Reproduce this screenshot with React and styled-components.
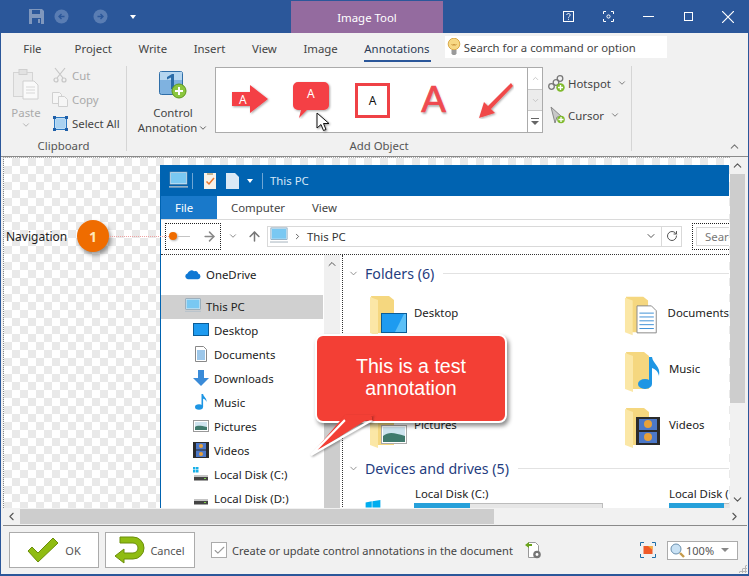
import React from 'react';
import styled, { createGlobalStyle } from 'styled-components';
import {
  ChevronDown, ChevronUp, ChevronLeft, ChevronRight, ArrowRight, ArrowUp, RotateCw, Check,
} from 'lucide-react';

const GlobalStyle = createGlobalStyle`
  html, body { margin: 0; padding: 0; background: #2b579a; }
  body { font-family: "Noto Sans", "Open Sans", Arial, sans-serif; font-size: 11.4px; color: #444; }
  * { box-sizing: border-box; }
`;

const Win = styled.div`
  width: 749px;
  height: 576px;
  background: #2b579a;
  display: flex;
  flex-direction: column;
  overflow: hidden;
`;

const TitleBar = styled.div`
  height: 33px;
  display: flex;
  align-items: center;
  padding-left: 29px;
  flex: none;
`;

const Qat = styled.div`
  width: 262px;
  display: flex;
  align-items: center;
`;

const QatItem = styled.div`
  display: flex;
  margin-left: ${p => p.$ml}px;
`;

const ContextTab = styled.div`
  width: 152px;
  height: 32px;
  margin-top: 1px;
  background: #946b9f;
  color: #fff;
  display: flex;
  align-items: center;
  justify-content: center;
`;

const WinButtons = styled.div`
  margin-left: 105px;
  display: flex;
  align-items: center;
  color: #fff;
`;

const WinBtn = styled.div`
  width: 40px;
  display: flex;
  justify-content: center;
`;

const Body = styled.div`
  flex: 1;
  margin: 0 1px 2px 1px;
  background: #f1f1f1;
  display: flex;
  flex-direction: column;
  min-height: 0;
`;

const TabRow = styled.div`
  height: 33px;
  display: flex;
  align-items: flex-start;
  padding-left: 22px;
  flex: none;
`;

const RibbonTab = styled.div`
  padding: 8px 13.3px 0;
  height: 29px;
  color: #444;
  position: relative;
  margin-left: ${p => p.$first ? '-13px' : '0'};
  margin-right: ${p => p.$first ? '6.5px' : '0'};
  ${p => p.$active && `
    color: #2b3a55;
    &::after {
      content: '';
      position: absolute;
      left: 13px; right: 12px; bottom: 0;
      height: 2px;
      background: #2b579a;
    }
  `}
`;

const SearchBox = styled.div`
  width: 222px;
  height: 22px;
  margin: 3px 0 0 2px;
  background: #fff;
  display: flex;
  align-items: center;
  gap: 3px;
  padding-left: 2px;
  font-size: 11.3px;
`;

const Ribbon = styled.div`
  height: 91px;
  flex: none;
  display: flex;
  border-bottom: 1px solid #8a8a8a;
  position: relative;
`;

const Group = styled.div`
  width: ${p => p.$w}px;
  border-right: 1px solid #d5d5d5;
  margin-bottom: 5px;
  display: flex;
  flex-direction: column;
  flex: none;
`;

const GroupBody = styled.div`
  flex: 1;
  display: flex;
  min-height: 0;
`;

const GroupLabel = styled.div`
  width: ${p => p.$w ? p.$w + 'px' : 'auto'};
  height: 15px;
  text-align: center;
  color: #555;
  line-height: 20px;
`;

const PasteBtn = styled.div`
  width: 50px;
  padding-top: 3px;
  display: flex;
  flex-direction: column;
  align-items: center;
  color: #aaa;
  line-height: 15px;
  flex: none;
`;

const PasteLabel = styled.span`
  margin-top: 5px;
`;

const SmallCol = styled.div`
  display: flex;
  flex-direction: column;
  gap: 8px;
  padding: 1px 0 0 1px;
`;

const SmallBtn = styled.div`
  display: flex;
  align-items: center;
  gap: 4px;
  height: 16px;
  color: ${p => p.$off ? '#aaa' : '#444'};
`;

const SmallIconBox = styled.div`
  width: 16px;
  display: flex;
  justify-content: center;
`;

const ControlBtn = styled.div`
  width: 88px;
  display: flex;
  flex-direction: column;
  align-items: center;
  padding: 5px 0 0 4px;
  line-height: 15px;
  text-align: center;
  color: #444;
  flex: none;
`;

const ControlLabel = styled.span`
  margin-top: 6px;
`;

const ControlLabel2 = styled.span`
  display: flex;
  align-items: center;
  gap: 1px;
`;

const Gallery = styled.div`
  width: 328px;
  height: 66px;
  margin: 1px 0 0 0;
  background: #fff;
  border: 1px solid #ababab;
  display: flex;
  flex: none;
`;

const GalleryItems = styled.div`
  flex: 1;
  display: flex;
  align-items: center;
  padding-left: 4px;
`;

const GalleryItem = styled.div`
  width: 61px;
  display: flex;
  justify-content: center;
`;

const BoxA = styled.div`
  width: 35px;
  height: 35px;
  border: 3px solid #ef4146;
  color: #111;
  display: flex;
  align-items: center;
  justify-content: center;
  font-size: 12px;
`;

const BigA = styled.div`
  font-family: "Liberation Sans", Arial, sans-serif;
  font-size: 37px;
  line-height: 36px;
  color: #ef4a50;
  -webkit-text-stroke: .7px #ef4a50;
  text-shadow: 1px 2px 2px rgba(0,0,0,.3);
  font-weight: 400;
`;

const GalleryScroll = styled.div`
  width: 15px;
  border-left: 1px solid #ababab;
  display: flex;
  flex-direction: column;
  color: #aaa;
`;

const ScrollCell = styled.div`
  flex: 1;
  display: flex;
  flex-direction: column;
  align-items: center;
  justify-content: center;
  border-bottom: ${p => p.$last ? 'none' : '1px solid #c8c8c8'};
  background: ${p => p.$shade ? '#ececec' : '#fff'};
  color: #bbb;
`;

const MoreLine = styled.div`
  width: 8px;
  height: 1px;
  background: #666;
  margin-bottom: 2px;
`;

const MoreCaret = styled.div`
  width: 0;
  height: 0;
  border: 4px solid transparent;
  border-top: 4px solid #666;
  border-bottom: none;
`;

const SideCol = styled.div`
  display: flex;
  flex-direction: column;
  gap: 14px;
  padding: 8px 0 0 5px;
`;

const SideBtn = styled.div`
  display: flex;
  align-items: center;
  gap: 3px;
  height: 18px;
  color: #444;
`;

const SideChevron = styled.div`
  display: flex;
  margin-left: ${p => p.$ml}px;
  color: #666;
`;

const Collapse = styled.div`
  position: absolute;
  right: 7px;
  bottom: 3px;
  color: #777;
  display: flex;
`;

const MouseCursor = styled.svg`
  position: absolute;
  left: 315px;
  top: 46px;
  filter: drop-shadow(1px 1px 1px rgba(0,0,0,.4));
`;

const WorkArea = styled.div`
  flex: 1;
  margin: 0 1px 0 2px;
  display: grid;
  grid-template-columns: 1fr 17px;
  grid-template-rows: 1fr 17px;
  min-height: 0;
  border-bottom: 1px solid #8a8a8a;
  background: #fff;
`;

const Canvas = styled.div`
  position: relative;
  overflow: hidden;
  min-width: 0;
  border-left: 1px dotted #888;
  border-top: 1px dotted #aaa;
  background: repeating-conic-gradient(#e9e9e9 0 25%, #fff 0 50%) 0 0 / 16px 16px;
`;

const VScroll = styled.div`
  background: #f1f1f1;
  display: flex;
  flex-direction: column;
  color: #555;
  padding-right: 2px;
`;

const VThumb = styled.div`
  height: 229px;
  background: #cdcdcd;
`;

const ArrowCell = styled.div`
  height: ${p => p.$h || 17}px;
  display: flex;
  align-items: center;
  justify-content: center;
  flex: none;
  margin-top: ${p => p.$auto ? 'auto' : '0'};
  margin-left: ${p => p.$autoL ? 'auto' : '0'};
  width: ${p => p.$w ? p.$w + 'px' : 'auto'};
`;

const HScroll = styled.div`
  grid-column: 1 / 3;
  background: #f1f1f1;
  display: flex;
  align-items: center;
  color: #555;
`;

const HThumb = styled.div`
  width: 474px;
  height: 15px;
  background: #cdcdcd;
`;

const Explorer = styled.div`
  position: absolute;
  left: 156px;
  top: 7px;
  width: 569px;
  height: 344px;
  background: #fff;
  border-left: 1px solid #0063b1;
  display: flex;
  flex-direction: column;
  overflow: hidden;
`;

const ExTitle = styled.div`
  height: 31px;
  background: #0063b1;
  color: #d5e8f7;
  display: flex;
  align-items: center;
  padding-left: 8px;
  flex: none;
`;

const ExTitleItem = styled.div`
  display: flex;
  margin-left: ${p => p.$ml}px;
`;

const ExDivider = styled.div`
  width: 1px;
  height: 16px;
  background: #6fa6d4;
  margin-left: ${p => p.$ml}px;
`;

const ExTabs = styled.div`
  height: 24px;
  display: flex;
  align-items: stretch;
  border-bottom: 1px solid #dadada;
  flex: none;
  color: #444;
`;

const ExTab = styled.div`
  padding: 0 ${p => p.$file ? 14 : 13.5}px;
  margin-left: ${p => p.$first ? '0.5px' : '0'};
  min-width: ${p => p.$file ? '56px' : 'auto'};
  display: flex;
  align-items: center;
  background: ${p => p.$file ? '#1979ca' : 'transparent'};
  color: ${p => p.$file ? '#fff' : '#444'};
`;

const ExAddress = styled.div`
  height: 35px;
  display: flex;
  align-items: center;
  border-bottom: 1px dotted #333;
  flex: none;
  padding: 0 0 2px 4px;
  color: #777;
`;

const NavButtons = styled.div`
  width: 56px;
  height: 27px;
  border: 1px dotted #222;
  display: flex;
  align-items: center;
  justify-content: flex-end;
  padding-right: 3px;
  margin-right: 7px;
  flex: none;
`;

const UpCell = styled.div`
  display: flex;
  margin-left: 9px;
`;

const AddressBox = styled.div`
  width: 415px;
  height: 21px;
  border: 1px solid #d9d9d9;
  margin-left: 5px;
  display: flex;
  align-items: center;
  gap: 5px;
  padding-left: 2px;
  color: #333;
  flex: none;
`;

const AddressEnd = styled.div`
  margin-left: auto;
  display: flex;
  align-items: center;
  height: 100%;
  color: #555;
`;

const RefreshCell = styled.div`
  width: 20px;
  height: 100%;
  border-left: 1px solid #d9d9d9;
  margin-left: 4px;
  display: flex;
  align-items: center;
  justify-content: center;
`;

const SearchField = styled.div`
  margin-left: 10px;
  width: 37px;
  height: 27px;
  border: 1px dotted #222;
  border-right: none;
  padding: 3px 0 3px 3px;
  overflow: hidden;
  flex: none;
`;

const SearchInner = styled.div`
  height: 19px;
  border: 1px solid #d9d9d9;
  border-right: none;
  padding-left: 8px;
  color: #777;
  line-height: 17px;
  white-space: nowrap;
  overflow: hidden;
`;

const ExMain = styled.div`
  flex: 1;
  display: flex;
  min-height: 0;
`;

const NavPane = styled.div`
  width: 162px;
  padding-top: 8px;
  display: flex;
  flex-direction: column;
  flex: none;
  color: #222;
`;

const NavRow = styled.div`
  height: 24px;
  display: flex;
  align-items: center;
  gap: 5px;
  flex: none;
  padding: 0 0 2px ${p => p.$indent ? 32 : 24}px;
  margin-bottom: ${p => p.$gap ? 8 : 0}px;
  background: ${p => p.$sel ? '#d0d0d0' : 'transparent'};
  white-space: nowrap;
`;

const NavScroll = styled.div`
  width: 16px;
  margin-left: 1px;
  padding-top: 3px;
  background: #f0f0f0;
  display: flex;
  flex-direction: column;
  align-items: center;
  color: #555;
  flex: none;
`;

const NavThumb = styled.div`
  width: 100%;
  flex: 1;
  margin-top: 100px;
  background: #cdcdcd;
`;

const Content = styled.div`
  flex: 1;
  margin-left: 2px;
  border-left: 1px dotted #333;
  padding: 6px 0 0 5px;
  min-width: 0;
`;

const SectionHead = styled.div`
  display: flex;
  align-items: center;
  gap: 6px;
  height: 24px;
  color: #1f3d80;
  font-size: 14.2px;
  white-space: nowrap;
  &::after {
    content: '';
    flex: 1;
    height: 1px;
    background: #e2e2e2;
    margin-left: 3px;
  }
`;

const FolderGrid = styled.div`
  display: grid;
  grid-template-columns: 255px 1fr;
  grid-auto-rows: 56px;
  padding: 11px 0 0 21px;
  height: 171px;
  color: #222;
`;

const FolderItem = styled.div`
  display: flex;
  align-items: flex-start;
  gap: 7px;
  white-space: nowrap;
  overflow: hidden;
`;

const FolderName = styled.div`
  padding-top: 9px;
`;

const DriveRow = styled.div`
  display: grid;
  grid-template-columns: 304px 1fr;
  padding: 6px 0 0 17px;
  color: #222;
`;

const Drive = styled.div`
  display: flex;
  gap: 34px;
  white-space: nowrap;
  overflow: hidden;
`;

const DriveBar = styled.div`
  width: 189px;
  height: 6px;
  margin: 2px 0 0 -1px;
  background: #e6e6e6;
  border: 1px solid #bcbcbc;
  border-bottom: none;
  position: relative;
  &::before {
    content: '';
    position: absolute;
    left: -1px; top: -1px; bottom: 0;
    width: ${p => p.$pct}%;
    background: #26a0da;
  }
`;

const WinLogo = styled.svg`
  margin-top: 14px;
`;

const MarkerLabel = styled.div`
  position: absolute;
  left: 2px;
  top: 70px;
  color: #222;
  font-size: 12px;
`;

const Marker = styled.div`
  position: absolute;
  left: 73px;
  top: 62px;
  width: 32px;
  height: 32px;
  border-radius: 50%;
  background: #ef6c00;
  color: #ffe9b8;
  font-size: 14px;
  font-weight: 700;
  display: flex;
  align-items: center;
  justify-content: center;
  box-shadow: 2px 3px 4px rgba(0,0,0,.4);
`;

const Leader = styled.div`
  position: absolute;
  left: 105px;
  top: 78px;
  width: 64px;
  border-top: 1px dotted #eda3a3;
`;

const Dot = styled.div`
  position: absolute;
  left: 165px;
  top: 74px;
  width: 8px;
  height: 8px;
  border-radius: 50%;
  background: #ef6c00;
  box-shadow: 1px 1px 2px rgba(0,0,0,.3);
`;

const DotTail = styled.div`
  position: absolute;
  left: 173px;
  top: 78px;
  width: 13px;
  height: 1px;
  background: #c4c4c4;
`;

const Callout = styled.div`
  position: absolute;
  left: 311px;
  top: 176px;
  width: 192px;
  height: 89px;
  background: #f33f35;
  border: 2px solid #fff;
  border-radius: 8px;
  box-shadow: 2px 3px 4px rgba(0,0,0,.45);
  color: #fff;
  font-family: "Liberation Sans", Arial, sans-serif;
  font-size: 19.6px;
  line-height: 22px;
  text-align: center;
  padding-top: 19px;
`;

const CalloutTail = styled.svg`
  position: absolute;
  left: 304px;
  top: 257px;
  filter: drop-shadow(1px 1px 1px rgba(0,0,0,.35));
`;

const Footer = styled.div`
  height: 48px;
  flex: none;
  display: flex;
  align-items: center;
  padding: 0 9px 0 8px;
  position: relative;
  color: #444;
`;

const FootBtn = styled.div`
  width: 90px;
  height: 36px;
  border: 1px solid #ababab;
  background: #fff;
  margin-right: 6px;
  display: flex;
  align-items: center;
  justify-content: center;
  gap: ${p => p.$gap}px;
  font-size: 11px;
  color: #555;
`;

const CheckBox = styled.div`
  width: 16px;
  height: 16px;
  margin-left: 10px;
  background: #fff;
  border: 1px solid #ababab;
  display: flex;
  align-items: center;
  justify-content: center;
  color: #999;
`;

const CheckLabel = styled.div`
  margin-left: 5px;
  width: 293px;
  font-size: 11.05px;
  white-space: nowrap;
`;

const FootSpacer = styled.div`
  width: 98px;
`;

const ZoomCombo = styled.div`
  width: 71px;
  height: 19px;
  margin-left: 11px;
  background: #fff;
  border: 1px solid #ababab;
  display: flex;
  align-items: center;
  gap: 1px;
  padding-left: 2px;
  font-size: 11px;
  color: #555;
`;

const ComboCaret = styled.span`
  width: 0;
  height: 0;
  margin-left: auto;
  margin-right: 8px;
  border: 4px solid transparent;
  border-top-color: #888;
  border-bottom: none;
`;

const Grip = styled.div`
  position: absolute;
  right: 1px;
  bottom: 1px;
  width: 9px;
  height: 9px;
  background: radial-gradient(#b5b5b5 1px, transparent 1.2px) 0 0 / 3px 3px;
  clip-path: polygon(100% 0, 100% 100%, 0 100%);
`;

const Caret = styled.span`
  width: 0;
  height: 0;
  border: 3px solid transparent;
  border-top: 4px solid #fff;
  border-bottom: none;
`;

const SaveIcon = () => (
  <svg width="15" height="15" viewBox="0 0 15 15">
    <path d="M0 0h13l2 2v13H0z" fill="#7f97bd" />
    <path d="M3 1h8v4H3zM3 9h9v6H3z" fill="#2b579a" />
    <path d="M9 10h2v4H9z" fill="#7f97bd" />
  </svg>
);

const DimCircle = ({ dir }) => (
  <svg width="15" height="15" viewBox="0 0 15 15">
    <circle cx="7.5" cy="7.5" r="7" fill="#5a7db3" />
    <path d={dir === 'l' ? 'M10.5 7.5H5M7.5 5l-2.5 2.5L7.5 10' : 'M4.5 7.5H10M7.5 5l2.5 2.5L7.5 10'} stroke="#2b579a" strokeWidth="1.4" fill="none" />
  </svg>
);

const Bulb = () => (
  <svg width="14" height="18" viewBox="0 0 14 18">
    <circle cx="7" cy="6" r="5.8" fill="#f7d884" stroke="#d9a94a" />
    <path d="M4.5 6l1.5 1.5L7 6l1 1.5L9.5 6" stroke="#c9933c" fill="none" />
    <path d="M4.5 12h5v3.5l-1.2 1.5H5.7l-1.2-1.5z" fill="#9a9a9a" />
  </svg>
);

const PasteIcon = () => (
  <svg width="26" height="31" viewBox="0 0 26 31">
    <rect x="0.5" y="3.5" width="19" height="24" fill="#ececec" stroke="#d4d4d4" />
    <rect x="6" y="0.5" width="8" height="5" fill="#e2e2e2" stroke="#cfcfcf" />
    <path d="M10 12h11l4 4v14H10z" fill="#fafafa" stroke="#d0d0d0" />
    <path d="M13 18h9M13 21h9M13 24h9" stroke="#d8d8d8" />
  </svg>
);

const CutIcon = () => (
  <svg width="14" height="16" viewBox="0 0 14 16" fill="none" stroke="#c6c6c6" strokeWidth="1.2">
    <path d="M2 1l8 10M12 1L4 11" />
    <circle cx="3" cy="13" r="2" />
    <circle cx="11" cy="13" r="2" />
  </svg>
);

const CopyIcon = () => (
  <svg width="16" height="15" viewBox="0 0 16 15" fill="#f6f6f6" stroke="#d0d0d0">
    <path d="M.5.5h7l2 2v9h-9z" />
    <path d="M6.5 4.5h6l3 3v7h-9z" />
  </svg>
);

const SelectAllIcon = () => (
  <svg width="15" height="15" viewBox="0 0 15 15">
    <rect x="1.5" y="1.5" width="12" height="12" fill="#bcdcf5" stroke="#2b78c2" />
    <path d="M3 3h9v9H3z" fill="#9fcbef" opacity=".6" />
    <path d="M0 0h3v3H0zM12 0h3v3h-3zM0 12h3v3H0zM12 12h3v3h-3z" fill="#1f5fa8" />
  </svg>
);

const ControlIcon = () => (
  <svg width="28" height="28" viewBox="0 0 28 28">
    <rect x="0.5" y="0.5" width="23" height="23" rx="2" fill="#7fb2e0" stroke="#2f6ea8" />
    <path d="M1 1h22v8H1z" fill="#b5d6f0" />
    <path d="M8 6l5-3h2v15h-3V6.5L8 8.5z" fill="#2b6ca8" />
    <circle cx="20" cy="20" r="7" fill="#8cc63f" stroke="#5e9a1c" />
    <path d="M16 20h8M20 16v8" stroke="#fff" strokeWidth="2" />
  </svg>
);

const ArrowA = () => (
  <svg width="40" height="32" viewBox="0 0 40 32">
    <defs>
      <filter id="s1" x="-20%" y="-20%" width="140%" height="140%">
        <feDropShadow dx="1" dy="1" stdDeviation="1.2" floodColor="#000" floodOpacity=".35" />
      </filter>
    </defs>
    <path d="M1 8h18V1l18 14-18 14v-7H1z" fill="#f43f45" filter="url(#s1)" />
    <text x="8" y="20" fill="#fff" fontSize="12" fontFamily="Noto Sans, sans-serif">A</text>
  </svg>
);

const BubbleA = () => (
  <svg width="40" height="38" viewBox="0 0 40 38">
    <path d="M6 1h26a5 5 0 0 1 5 5v18a5 5 0 0 1-5 5H15l-8 8 2-8H6a5 5 0 0 1-5-5V6a5 5 0 0 1 5-5z" fill="#f43f45" filter="url(#s1)" />
    <text x="15" y="17" fill="#fff" fontSize="12" fontFamily="Noto Sans, sans-serif">A</text>
  </svg>
);

const RedArrow = () => (
  <svg width="38" height="38" viewBox="0 0 38 38">
    <path d="M35 2L12 25l-4-4-5 16 16-5-4-4L37 5z" fill="#f04a4a" filter="url(#s1)" />
  </svg>
);

const HotspotIcon = () => (
  <svg width="17" height="17" viewBox="0 0 17 17">
    <g fill="none" stroke="#777" strokeWidth="1.3">
      <circle cx="12" cy="3.5" r="2.8" />
      <circle cx="8" cy="7.5" r="2.8" />
      <circle cx="3.5" cy="11.5" r="2.8" />
    </g>
    <circle cx="12.5" cy="12.5" r="4.2" fill="#7fba2c" />
    <path d="M10 12.5h5M12.5 10v5" stroke="#fff" strokeWidth="1.4" />
  </svg>
);

const CursorIcon = () => (
  <svg width="17" height="18" viewBox="0 0 17 18">
    <path d="M3 1l11 10H9l-2 6z" fill="#c8c8c8" stroke="#888" />
    <circle cx="13" cy="13.5" r="3.8" fill="#7fba2c" />
    <path d="M10.5 13.5h5M13 11v5" stroke="#fff" strokeWidth="1.3" />
  </svg>
);

const Monitor = ({ w = 18 }) => (
  <svg width={w} height={w} viewBox="0 0 20 20">
    <rect x="1.5" y="1.5" width="17" height="12" fill="#79c8f2" stroke="#d7eefb" />
    <rect x="1" y="1" width="18" height="13" fill="none" stroke="#5a7f9c" strokeWidth=".6" />
    <path d="M0 16h20v1.4H0z" fill="#b9c4cc" />
  </svg>
);

const TitleDoc = () => (
  <svg width="12" height="16" viewBox="0 0 12 16">
    <path d="M0 0h12v16H0z" fill="#f6f2ea" />
    <path d="M3 0h6v2H3z" fill="#c9b58e" />
    <path d="M2.5 8.5l2.5 2.5L10 5" stroke="#e8762c" strokeWidth="1.5" fill="none" />
  </svg>
);

const TitlePage = () => (
  <svg width="13" height="16" viewBox="0 0 13 16">
    <path d="M0 0h9l4 4v12H0z" fill="#dbe9f5" />
  </svg>
);

const DesktopIcon = () => (
  <svg width="16" height="16" viewBox="0 0 16 16">
    <rect x="0.5" y="1.5" width="15" height="12" fill="#1e9bf0" stroke="#0b5c97" />
  </svg>
);

const DocIcon = () => (
  <svg width="16" height="16" viewBox="0 0 12 16">
    <path d="M.5.5h8l3 3v12H.5z" fill="#fff" stroke="#888" />
    <path d="M2 5h8M2 7h8M2 9h8M2 11h8M2 13h8" stroke="#3b8fd4" />
  </svg>
);

const DownIcon = () => (
  <svg width="16" height="16" viewBox="0 0 16 16">
    <path d="M5 0h6v8h5l-8 8-8-8h5z" fill="#3a8bd8" />
  </svg>
);

const MusicIcon = () => (
  <svg width="16" height="16" viewBox="0 0 16 16">
    <ellipse cx="6" cy="13" rx="4" ry="2.8" fill="#1e96e4" />
    <path d="M8.5 13V0h1.6c.4 3 4 4 3.4 8-.5-2-2-3-3.4-3.2V13z" fill="#1e96e4" />
  </svg>
);

const PicIcon = () => (
  <svg width="16" height="12" viewBox="0 0 16 12">
    <rect x=".5" y=".5" width="15" height="11" fill="#fff" stroke="#999" />
    <rect x="2" y="2" width="12" height="8" fill="#cfe4ef" />
    <path d="M2 7c3-2 6-1 12 0v3H2z" fill="#3f7a6d" />
  </svg>
);

const FilmIcon = () => (
  <svg width="16" height="16" viewBox="0 0 16 16">
    <rect width="16" height="16" fill="#2b2b2b" />
    <rect x="3" y="1" width="10" height="6.5" fill="#4c78c8" />
    <rect x="3" y="8.5" width="10" height="6.5" fill="#4c78c8" />
    <circle cx="8" cy="4" r="2" fill="#e8a13a" />
    <circle cx="8" cy="12" r="2" fill="#e8a13a" />
  </svg>
);

const DiskIcon = ({ win }) => (
  <svg width="16" height="16" viewBox="0 0 16 16">
    {win && <path d="M0 1h2.5v2.5H0zM3 1h2.5v2.5H3zM0 4h2.5v2.5H0zM3 4h2.5v2.5H3z" fill="#18b0e8" />}
    <path d="M1 9h14v2H1z" fill="#c4c4c4" />
    <path d="M1 11h14v3.5H1z" fill="#444" />
    <path d="M11 12h2v1h-2z" fill="#7fd04a" />
  </svg>
);

const OneDrive = () => (
  <svg width="16" height="12" viewBox="0 0 17 12">
    <path d="M3 11.5a3 3 0 0 1-.4-5.9A4.5 4.5 0 0 1 9.6 3a3.2 3.2 0 0 1 4.4 2.6 3 3 0 0 1 0 5.9z" fill="#0f78d4" />
  </svg>
);

const Folder = ({ children }) => (
  <svg width="38" height="40" viewBox="0 0 38 40">
    <path d="M2 0h18l5 4v33H8z" fill="#f5d77f" />
    <path d="M1 1l8 3v36l-8-3z" fill="#fbe7a6" />
    {children}
  </svg>
);

const FootIconCheck = () => (
  <svg width="32" height="26" viewBox="0 0 32 26">
    <path d="M1 14l4-4 6 6L26 1l5 5-20 19z" fill="#8fbc12" stroke="#6b8e0a" />
  </svg>
);

const FootIconBack = () => (
  <svg width="30" height="28" viewBox="0 0 30 28">
    <path d="M5 1h13a11 11 0 0 1 0 22H9v4L0 20l9-7v4h9a5 5 0 0 0 0-10H5z" fill="#8fbc12" stroke="#6b8e0a" />
  </svg>
);

const DocGear = () => (
  <svg width="17" height="17" viewBox="0 0 17 17">
    <path d="M3.5.5h7l3 3v12h-10z" fill="#fff" stroke="#999" />
    <path d="M0 3l4-3v2h3v2H4v2z" fill="#6aa31c" />
    <circle cx="12" cy="12.5" r="3.8" fill="#777" />
    <circle cx="12" cy="12.5" r="1.4" fill="#fff" />
  </svg>
);

const FitIcon = () => (
  <svg width="16" height="16" viewBox="0 0 16 16">
    <path d="M.5 4V.5H4M12 .5h3.5V4M15.5 12v3.5H12M4 15.5H.5V12" stroke="#1f6fa8" fill="none" />
    <rect x="3.5" y="4" width="9" height="8" fill="#ef5a28" />
    <path d="M8 4h4.5v4z" fill="#f5b13d" />
  </svg>
);

const ZoomGlass = () => (
  <svg width="15" height="15" viewBox="0 0 15 15">
    <circle cx="6" cy="6" r="5" fill="#c9e2f5" stroke="#6a8fad" />
    <path d="M10 10l4 4" stroke="#c49a4a" strokeWidth="2.4" />
  </svg>
);

const HelpIcon = () => (
  <svg width="11" height="11" viewBox="0 0 11 11" fill="none" stroke="#fff">
    <rect x=".5" y=".5" width="10" height="10" />
    <path d="M3.8 4c0-2 3.4-2 3.4 0 0 1.3-1.7 1.2-1.7 2.7M5.5 7.8v1" />
  </svg>
);

const FocusIcon = () => (
  <svg width="11" height="11" viewBox="0 0 11 11" fill="none" stroke="#fff">
    <path d="M.5 3V.5H3M8 .5h2.5V3M10.5 8v2.5H8M3 10.5H.5V8" />
    <circle cx="5.5" cy="5.5" r="1.6" />
  </svg>
);

const MinIcon = () => (
  <svg width="11" height="11" viewBox="0 0 11 11" stroke="#fff"><path d="M0 5.5h11" /></svg>
);
const MaxIcon = () => (
  <svg width="9" height="9" viewBox="0 0 9 9" fill="none" stroke="#fff"><rect x=".5" y=".5" width="8" height="8" /></svg>
);
const CloseIcon = () => (
  <svg width="12" height="12" viewBox="0 0 12 12" stroke="#fff" strokeWidth="1.2"><path d="M0 0l12 12M12 0L0 12" /></svg>
);

const navItems = [
  ['Desktop', <DesktopIcon key="d" />],
  ['Documents', <DocIcon key="d" />],
  ['Downloads', <DownIcon key="d" />],
  ['Music', <MusicIcon key="d" />],
  ['Pictures', <PicIcon key="d" />],
  ['Videos', <FilmIcon key="d" />],
  ['Local Disk (C:)', <DiskIcon key="d" win />],
  ['Local Disk (D:)', <DiskIcon key="d" />],
];

const tabs = ['File', 'Project', 'Write', 'Insert', 'View', 'Image', 'Annotations'];

export default function App() {
  return (
    <Win>
      <GlobalStyle />
      <TitleBar>
        <Qat>
          <SaveIcon />
          <QatItem $ml={10}><DimCircle dir="l" /></QatItem>
          <QatItem $ml={24}><DimCircle dir="r" /></QatItem>
          <QatItem $ml={22}><Caret /></QatItem>
        </Qat>
        <ContextTab>Image Tool</ContextTab>
        <WinButtons>
          <WinBtn><HelpIcon /></WinBtn>
          <WinBtn><FocusIcon /></WinBtn>
          <WinBtn><MinIcon /></WinBtn>
          <WinBtn><MaxIcon /></WinBtn>
          <WinBtn><CloseIcon /></WinBtn>
        </WinButtons>
      </TitleBar>
      <Body>
        <TabRow>
          {tabs.map((t, i) => (
            <RibbonTab key={t} $first={i === 0} $active={t === 'Annotations'}>{t}</RibbonTab>
          ))}
          <SearchBox><Bulb />Search for a command or option</SearchBox>
        </TabRow>
        <Ribbon>
          <Group $w={126}>
            <GroupBody>
              <PasteBtn>
                <PasteIcon />
                <PasteLabel>Paste</PasteLabel>
                <ChevronDown size={10} />
              </PasteBtn>
              <SmallCol>
                <SmallBtn $off><SmallIconBox><CutIcon /></SmallIconBox>Cut</SmallBtn>
                <SmallBtn $off><SmallIconBox><CopyIcon /></SmallIconBox>Copy</SmallBtn>
                <SmallBtn><SmallIconBox><SelectAllIcon /></SmallIconBox>Select All</SmallBtn>
              </SmallCol>
            </GroupBody>
            <GroupLabel>Clipboard</GroupLabel>
          </Group>
          <ControlBtn>
            <ControlIcon />
            <ControlLabel>Control</ControlLabel>
            <ControlLabel2>Annotation <ChevronDown size={10} /></ControlLabel2>
          </ControlBtn>
          <Group $w={417}>
            <GroupBody>
              <Gallery>
                <GalleryItems>
                  <GalleryItem><ArrowA /></GalleryItem>
                  <GalleryItem><BubbleA /></GalleryItem>
                  <GalleryItem><BoxA>A</BoxA></GalleryItem>
                  <GalleryItem><BigA>A</BigA></GalleryItem>
                  <GalleryItem><RedArrow /></GalleryItem>
                </GalleryItems>
                <GalleryScroll>
                  <ScrollCell><ChevronUp size={9} /></ScrollCell>
                  <ScrollCell $shade><ChevronDown size={9} /></ScrollCell>
                  <ScrollCell $last><MoreLine /><MoreCaret /></ScrollCell>
                </GalleryScroll>
              </Gallery>
              <SideCol>
                <SideBtn><HotspotIcon />Hotspot<SideChevron $ml={3}><ChevronDown size={10} /></SideChevron></SideBtn>
                <SideBtn><CursorIcon />Cursor<SideChevron $ml={3}><ChevronDown size={10} /></SideChevron></SideBtn>
              </SideCol>
            </GroupBody>
            <GroupLabel $w={328}>Add Object</GroupLabel>
          </Group>
          <MouseCursor width="14" height="20" viewBox="0 0 14 20">
            <path d="M1 1v15l4-3.5 2.5 6 2.5-1-2.5-6H13z" fill="#fff" stroke="#111" />
          </MouseCursor>
          <Collapse><ChevronUp size={13} /></Collapse>
        </Ribbon>
        <WorkArea>
          <Canvas>
            <MarkerLabel>Navigation</MarkerLabel>
            <Marker>1</Marker>
            <Explorer>
              <ExTitle>
                <Monitor w={19} />
                <ExDivider $ml={4} />
                <ExTitleItem $ml={11}><TitleDoc /></ExTitleItem>
                <ExTitleItem $ml={10}><TitlePage /></ExTitleItem>
                <ExTitleItem $ml={8}><Caret /></ExTitleItem>
                <ExDivider $ml={9} />
                <ExTitleItem $ml={7}>This PC</ExTitleItem>
              </ExTitle>
              <ExTabs>
                <ExTab $file>File</ExTab>
                <ExTab $first>Computer</ExTab>
                <ExTab>View</ExTab>
              </ExTabs>
              <ExAddress>
                <NavButtons><ArrowRight size={15} strokeWidth={2.4} color="#888" /></NavButtons>
                <ChevronDown size={10} />
                <UpCell><ArrowUp size={15} strokeWidth={2.4} /></UpCell>
                <AddressBox>
                  <Monitor w={18} />
                  <ChevronRight size={9} />
                  This PC
                  <AddressEnd>
                    <ChevronDown size={12} />
                    <RefreshCell><RotateCw size={12} /></RefreshCell>
                  </AddressEnd>
                </AddressBox>
                <SearchField><SearchInner>Search</SearchInner></SearchField>
              </ExAddress>
              <ExMain>
                <NavPane>
                  <NavRow $gap><OneDrive />OneDrive</NavRow>
                  <NavRow $sel><Monitor w={16} />This PC</NavRow>
                  {navItems.map(([name, icon]) => (
                    <NavRow key={name} $indent>{icon}{name}</NavRow>
                  ))}
                </NavPane>
                <NavScroll>
                  <ChevronUp size={12} />
                  <NavThumb />
                </NavScroll>
                <Content>
                  <SectionHead><ChevronDown size={11} color="#888" />Folders (6)</SectionHead>
                  <FolderGrid>
                    <FolderItem>
                      <Folder>
                        <rect x="12.5" y="17.5" width="25" height="19" fill="#1e9bf0" stroke="#0b5c97" />
                        <path d="M26 36l9-18h2v18z" fill="#5cc0f7" />
                      </Folder>
                      <FolderName>Desktop</FolderName>
                    </FolderItem>
                    <FolderItem>
                      <Folder>
                        <path d="M13.5 9.5h15l5 5v23h-20z" fill="#fff" stroke="#888" />
                        <path d="M16 17h15M16 21h15M16 25h15M16 29h15M16 33h15" stroke="#3b8fd4" />
                      </Folder>
                      <FolderName>Documents</FolderName>
                    </FolderItem>
                    <div />
                    <FolderItem>
                      <Folder>
                        <ellipse cx="21" cy="32" rx="7" ry="5" fill="#1e96e4" />
                        <path d="M25 32V5h3c1 7 9 9 7 19-1-5-4-7-7-8v16z" fill="#1e96e4" />
                      </Folder>
                      <FolderName>Music</FolderName>
                    </FolderItem>
                    <FolderItem>
                      <Folder>
                        <rect x="12.5" y="17.5" width="25" height="18" fill="#fff" stroke="#aaa" />
                        <rect x="14" y="19" width="22" height="15" fill="#cfe4ef" />
                        <path d="M14 28c6-5 12-3 22 0v6H14z" fill="#3f7a6d" />
                      </Folder>
                      <FolderName>Pictures</FolderName>
                    </FolderItem>
                    <FolderItem>
                      <Folder>
                        <rect x="12" y="9" width="24" height="28" fill="#2b2b2b" />
                        <rect x="15" y="11" width="18" height="11" fill="#4c78c8" />
                        <rect x="15" y="24" width="18" height="11" fill="#4c78c8" />
                        <circle cx="24" cy="16" r="4" fill="#e8a13a" />
                        <circle cx="24" cy="29" r="4" fill="#e8a13a" />
                      </Folder>
                      <FolderName>Videos</FolderName>
                    </FolderItem>
                  </FolderGrid>
                  <SectionHead><ChevronDown size={11} color="#888" />Devices and drives (5)</SectionHead>
                  <DriveRow>
                    <Drive>
                      <WinLogo width="16" height="16" viewBox="0 0 26 26">
                        <path d="M1 4l10-2v10H1zM12 2l13-2v12H12zM1 13h10v10L1 22zM12 13h13v13l-13-2z" fill="#00adef" />
                      </WinLogo>
                      <div>
                        Local Disk (C:)
                        <DriveBar $pct={30} />
                      </div>
                    </Drive>
                    <Drive>
                      <div>
                        Local Disk (D:)
                        <DriveBar $pct={30} />
                      </div>
                    </Drive>
                  </DriveRow>
                </Content>
              </ExMain>
            </Explorer>
            <Leader />
            <Dot />
            <DotTail />
            <Callout>This is a test<br />annotation</Callout>
            <CalloutTail width="70" height="50" viewBox="0 0 70 50">
              <path d="M37 0L3 40 66 0z" fill="#f33f35" />
              <path d="M37 5L3 40 64 5" fill="none" stroke="#fff" strokeWidth="2.4" />
              <path d="M37 2h27v3.5H37z" fill="#f33f35" />
            </CalloutTail>
          </Canvas>
          <VScroll>
            <ArrowCell><ChevronUp size={13} /></ArrowCell>
            <VThumb />
            <ArrowCell $auto><ChevronDown size={13} /></ArrowCell>
          </VScroll>
          <HScroll>
            <ArrowCell $w={17}><ChevronLeft size={13} /></ArrowCell>
            <HThumb />
            <ArrowCell $autoL $w={26}><ChevronRight size={13} /></ArrowCell>
          </HScroll>
        </WorkArea>
        <Footer>
          <FootBtn $gap={6}><FootIconCheck />OK</FootBtn>
          <FootBtn $gap={5}><FootIconBack />Cancel</FootBtn>
          <CheckBox><Check size={13} /></CheckBox>
          <CheckLabel>Create or update control annotations in the document</CheckLabel>
          <DocGear />
          <FootSpacer />
          <FitIcon />
          <ZoomCombo><ZoomGlass />100%<ComboCaret /></ZoomCombo>
          <Grip />
        </Footer>
      </Body>
    </Win>
  );
}
